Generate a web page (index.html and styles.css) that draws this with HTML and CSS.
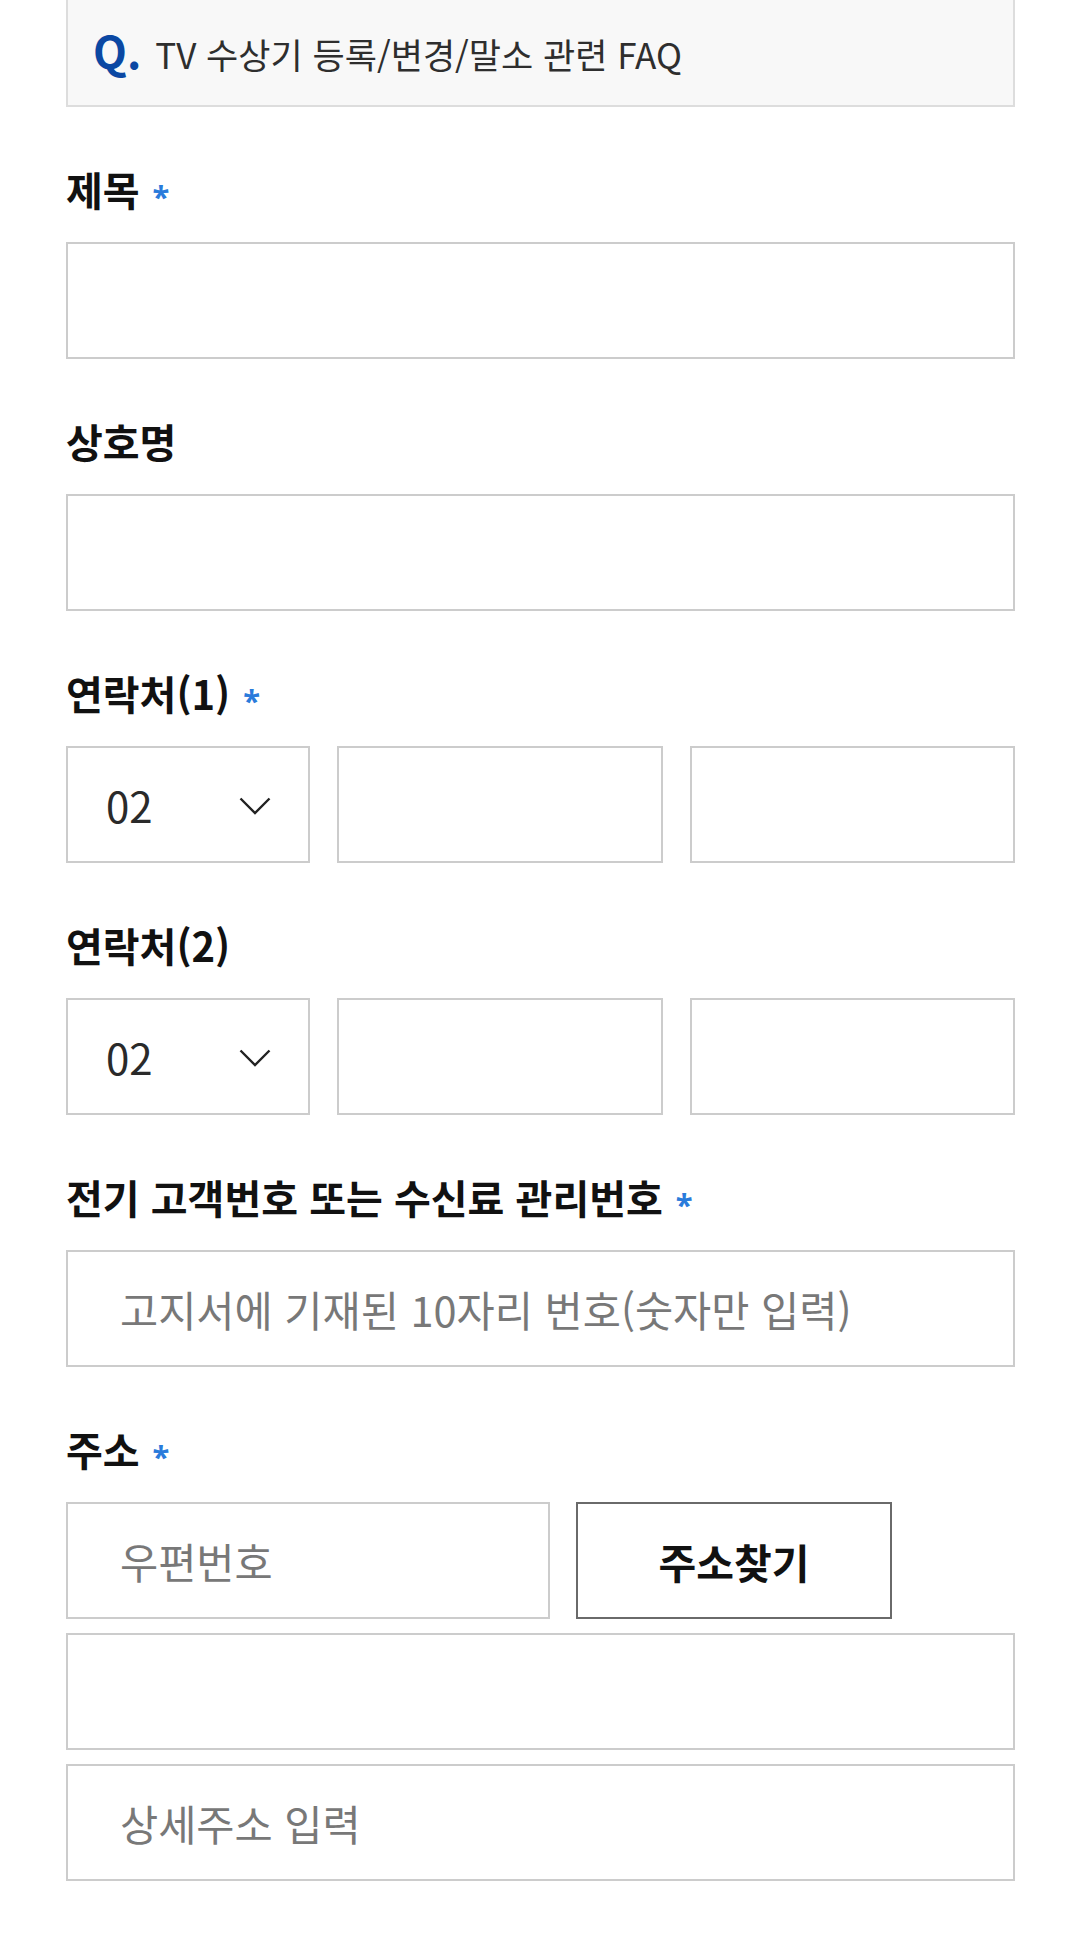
FILE: index.html
```html
<!DOCTYPE html>
<html lang="ko">
<head>
<meta charset="utf-8">
<title>문의하기</title>
<link rel="stylesheet" href="styles.css">
</head>
<body>
<main class="page">
  <div class="faq"><span class="faq-q">Q.</span><span class="faq-text">TV 수상기 등록/변경/말소 관련 FAQ</span></div>

  <div class="field">
    <label class="label">제목<span class="req">*</span></label>
    <input class="input" type="text">
  </div>

  <div class="field">
    <label class="label">상호명</label>
    <input class="input" type="text">
  </div>

  <div class="field">
    <label class="label">연락처(1)<span class="req">*</span></label>
    <div class="phone">
      <div class="select"><span class="select-value">02</span><svg class="chev" width="32" height="18" viewBox="0 0 32 18"><polyline points="1.5,1.5 16,16 30.5,1.5" fill="none" stroke="#222" stroke-width="2.4"/></svg></div>
      <input class="input" type="text">
      <input class="input" type="text">
    </div>
  </div>

  <div class="field">
    <label class="label">연락처(2)</label>
    <div class="phone">
      <div class="select"><span class="select-value">02</span><svg class="chev" width="32" height="18" viewBox="0 0 32 18"><polyline points="1.5,1.5 16,16 30.5,1.5" fill="none" stroke="#222" stroke-width="2.4"/></svg></div>
      <input class="input" type="text">
      <input class="input" type="text">
    </div>
  </div>

  <div class="field">
    <label class="label">전기 고객번호 또는 수신료 관리번호<span class="req">*</span></label>
    <input class="input" type="text" placeholder="고지서에 기재된 10자리 번호(숫자만 입력)">
  </div>

  <div class="field">
    <label class="label">주소<span class="req">*</span></label>
    <div class="zip-row">
      <input class="input zip" type="text" placeholder="우편번호">
      <button class="btn" type="button">주소찾기</button>
    </div>
    <input class="input addr" type="text">
    <input class="input addr" type="text" placeholder="상세주소 입력">
  </div>
</main>
</body>
</html>
```

FILE: styles.css
```css
* {
  box-sizing: border-box;
}

html, body {
  margin: 0;
  padding: 0;
  background: #ffffff;
}

body {
  font-family: "Noto Sans CJK KR", "Noto Sans", sans-serif;
  color: #111111;
}

.page {
  padding: 0 65px 60px 66px;
}

.faq {
  height: 107px;
  background: #f8f8f8;
  border: 2px solid #dddddd;
  border-top: none;
  padding: 25px 25px 0;
  font-size: 35px;
  line-height: 50px;
  color: #2e2e2e;
  white-space: nowrap;
}

.faq-q {
  font-size: 44px;
  font-weight: 700;
  color: #0b48a3;
  margin-right: 14px;
}

.field {
  margin-top: 53px;
}

.label {
  display: flex;
  align-items: center;
  gap: 13px;
  height: 58px;
  margin-bottom: 24px;
  font-size: 40px;
  font-weight: 700;
  color: #111111;
  line-height: 58px;
}

.req {
  font-family: "Noto Sans", sans-serif;
  font-size: 31px;
  line-height: 1;
  color: #2a7bdb;
  margin-top: 14px;
}

.input {
  display: block;
  width: 100%;
  height: 117px;
  margin: 0;
  border: 2px solid #cccccc;
  border-radius: 0;
  background: #ffffff;
  padding: 0 52px;
  font: inherit;
  font-size: 41.5px;
  color: #222222;
  outline: none;
}

.input::placeholder {
  color: #787878;
  opacity: 1;
}

.phone {
  display: grid;
  grid-template-columns: 244px 1fr 1fr;
  gap: 27px;
}

.select {
  height: 117px;
  border: 2px solid #cccccc;
  display: flex;
  align-items: center;
  justify-content: space-between;
  padding: 0 37px 0 38px;
}

.select-value {
  font-size: 42px;
  color: #2a2a2a;
}

.chev {
  display: block;
  margin-top: 2px;
}

.zip-row {
  display: flex;
  gap: 26px;
  margin-bottom: 14px;
}

.zip {
  width: 484px;
}

.btn {
  width: 316px;
  height: 117px;
  margin: 0;
  border: 2px solid #6a6a6a;
  border-radius: 0;
  background: #ffffff;
  font: inherit;
  font-size: 41px;
  font-weight: 700;
  color: #111111;
  padding: 0;
}

.addr + .addr {
  margin-top: 14px;
}
```
